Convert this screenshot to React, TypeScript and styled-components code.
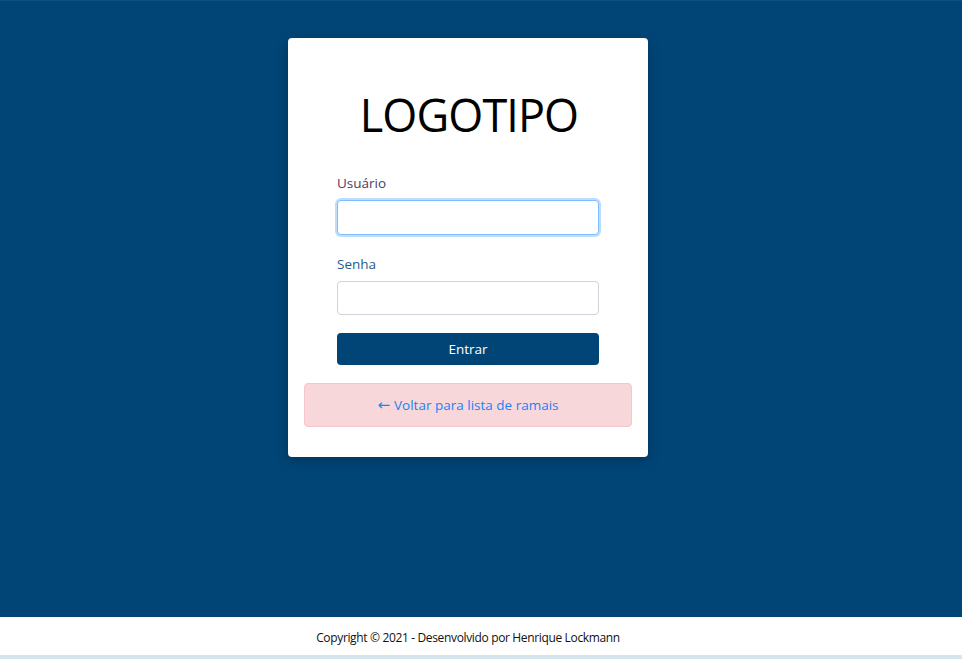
import styled, { createGlobalStyle } from 'styled-components'

const GlobalStyle = createGlobalStyle`
    html, body {
        margin: 0;
        padding: 0;
        height: 100%;
    }
    body {
        font-family: "Open Sans", "Noto Sans", "Liberation Sans", sans-serif;
        background: #fff;
    }
    * {
        box-sizing: border-box;
    }
`;

const Page = styled.div`
    display: flex;
    flex-direction: column;
    height: 659px;
`;

const Main = styled.main`
    flex: 1;
    background-color: #014577;
    border-top: 1px solid #0d4f80;
    display: flex;
    justify-content: center;
    align-items: flex-start;
    padding-top: 37px;
    padding-right: 26px;
`;

const Card = styled.div`
    width: 360px;
    background: #fff;
    border-radius: 4px;
    box-shadow: 0 4px 12px rgba(0, 0, 0, 0.25);
    padding: 49px 16px 30px;
    display: flex;
    flex-direction: column;
    align-items: center;
`;

const Logo = styled.h1`
    margin: 0;
    font-family: "Open Sans", sans-serif;
    font-weight: 400;
    font-size: 45px;
    line-height: 56px;
    color: #000;
    letter-spacing: -0.9px;
    padding-left: 2px;
`;

const Form = styled.form`
    width: 262px;
    margin-top: 31px;
    display: flex;
    flex-direction: column;
`;

const Label = styled.label<{ $color: string }>`
    font-size: 13.5px;
    line-height: 18px;
    color: ${p => p.$color};
    margin-bottom: 8px;
`;

const Input = styled.input<{ $focus?: boolean }>`
    width: 100%;
    height: ${p => (p.$focus ? 35 : 34)}px;
    border: 1px solid ${p => (p.$focus ? '#80bdff' : '#ced4da')};
    border-radius: 4px;
    outline: none;
    box-shadow: ${p => (p.$focus ? '0 0 0 2px rgba(0, 123, 255, 0.25)' : 'none')};
    margin-bottom: 20px;
    font-size: 14px;
    padding: 4px 10px;
`;

const Button = styled.button`
    margin-top: -2px;
    height: 32px;
    width: 100%;
    background: #014577;
    color: #fff;
    border: none;
    border-radius: 4px;
    font-family: "Open Sans", sans-serif;
    font-size: 13.5px;
`;

const Alert = styled.a`
    margin-top: 18px;
    align-self: stretch;
    height: 44px;
    background: #f8d7da;
    border: 1px solid #f5c6cb;
    border-radius: 4px;
    color: #1a82f7;
    font-size: 13.5px;
    display: flex;
    align-items: center;
    justify-content: center;
    gap: 4px;
    text-decoration: none;
`;

const Arrow = styled.span`
    font-family: "DejaVu Sans", sans-serif;
    font-size: 15px;
    line-height: 1;
`;

const Footer = styled.footer`
    height: 42px;
    background: #fff;
    border-bottom: 4px solid #d4e5f0;
    display: flex;
    align-items: center;
    justify-content: center;
    font-size: 12px;
    letter-spacing: -0.35px;
    color: #111;
    padding-right: 26px;
    padding-top: 2px;
`;

export default function App() {
    return (
        <>
            <GlobalStyle />
            <Page>
                <Main>
                    <Card>
                        <Logo>LOGOTIPO</Logo>
                        <Form onSubmit={e => e.preventDefault()}>
                            <Label $color="#4a3d66">Usuário</Label>
                            <Input $focus />
                            <Label $color="#1f5a8c">Senha</Label>
                            <Input type="password" />
                            <Button type="submit">Entrar</Button>
                        </Form>
                        <Alert href="#">
                            <Arrow>←</Arrow>
                            Voltar para lista de ramais
                        </Alert>
                    </Card>
                </Main>
                <Footer>Copyright © 2021 - Desenvolvido por Henrique Lockmann</Footer>
            </Page>
        </>
    )
}
